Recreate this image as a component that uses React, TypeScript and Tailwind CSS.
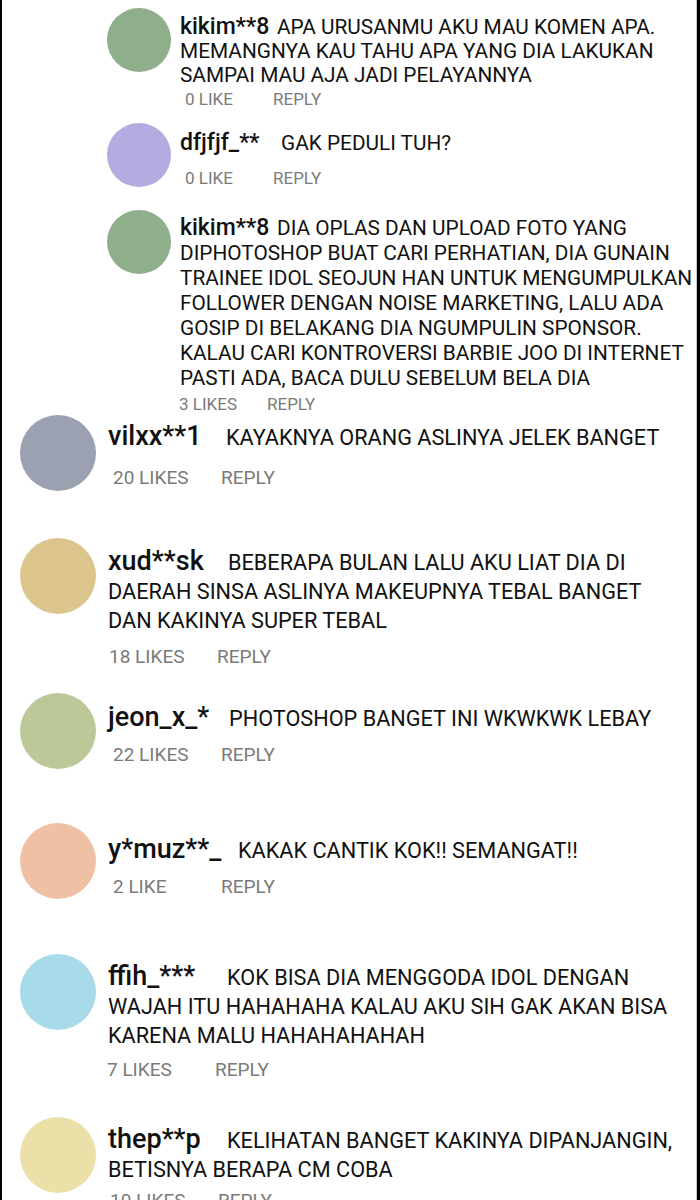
import React from "react";

type Item = {
  name: string;
  color: string;
  lines: string[];
  likes: string;
  h: string;
  pt: string;
  nameW: string;
  likesMt: string;
  likesMl: string;
  lead?: string;
};

const replies: Item[] = [
  {
    name: "kikim**8",
    color: "bg-[#8fae8b]",
    lines: [
      "APA URUSANMU AKU MAU KOMEN APA.",
      "MEMANGNYA KAU TAHU APA YANG DIA LAKUKAN",
      "SAMPAI MAU AJA JADI PELAYANNYA",
    ],
    likes: "0 LIKE",
    h: "h-[115px]",
    pt: "pt-[7px]",
    nameW: "w-[97px]",
    likesMt: "mt-[2px]",
    likesMl: "ml-[5px]",
    lead: "leading-[24px]",
  },
  {
    name: "dfjfjf_**",
    color: "bg-[#b2ace0]",
    lines: ["GAK PEDULI TUH?"],
    likes: "0 LIKE",
    h: "h-[87px]",
    pt: "pt-[7px]",
    nameW: "w-[101px]",
    likesMt: "mt-[12px]",
    likesMl: "ml-[5px]",
  },
  {
    name: "kikim**8",
    color: "bg-[#8fae8b]",
    lines: [
      "DIA OPLAS DAN UPLOAD FOTO YANG",
      "DIPHOTOSHOP BUAT CARI PERHATIAN, DIA GUNAIN",
      "TRAINEE IDOL SEOJUN HAN UNTUK MENGUMPULKAN",
      "FOLLOWER DENGAN NOISE MARKETING, LALU ADA",
      "GOSIP DI BELAKANG DIA NGUMPULIN SPONSOR.",
      "KALAU CARI KONTROVERSI BARBIE JOO DI INTERNET",
      "PASTI ADA, BACA DULU SEBELUM BELA DIA",
    ],
    likes: "3 LIKES",
    h: "h-[205px]",
    pt: "pt-[5px]",
    nameW: "w-[97px]",
    likesMt: "mt-[3px]",
    likesMl: "ml-[-1px]",
  },
];

const mains: Item[] = [
  {
    name: "vilxx**1",
    color: "bg-[#9ca1b2]",
    lines: ["KAYAKNYA ORANG ASLINYA JELEK BANGET"],
    likes: "20 LIKES",
    h: "h-[123px]",
    pt: "pt-[7px]",
    nameW: "w-[118px]",
    likesMt: "mt-[14px]",
    likesMl: "ml-[5px]",
  },
  {
    name: "xud**sk",
    color: "bg-[#dcc58c]",
    lines: [
      "BEBERAPA BULAN LALU AKU LIAT DIA DI",
      "DAERAH SINSA ASLINYA MAKEUPNYA TEBAL BANGET",
      "DAN KAKINYA SUPER TEBAL",
    ],
    likes: "18 LIKES",
    h: "h-[155px]",
    pt: "pt-[9px]",
    nameW: "w-[120px]",
    likesMt: "mt-[10px]",
    likesMl: "ml-[1px]",
  },
  {
    name: "jeon_x_*",
    color: "bg-[#bdc898]",
    lines: ["PHOTOSHOP BANGET INI WKWKWK LEBAY"],
    likes: "22 LIKES",
    h: "h-[130px]",
    pt: "pt-[10px]",
    nameW: "w-[121px]",
    likesMt: "mt-[10px]",
    likesMl: "ml-[5px]",
  },
  {
    name: "y*muz**_",
    color: "bg-[#efc0a4]",
    lines: ["KAKAK CANTIK KOK!! SEMANGAT!!"],
    likes: "2 LIKE",
    h: "h-[131px]",
    pt: "pt-[12px]",
    nameW: "w-[130px]",
    likesMt: "mt-[10px]",
    likesMl: "ml-[5px]",
  },
  {
    name: "ffih_***",
    color: "bg-[#a8dbe9]",
    lines: [
      "KOK BISA DIA MENGGODA IDOL DENGAN",
      "WAJAH ITU HAHAHAHA KALAU AKU SIH GAK AKAN BISA",
      "KARENA MALU HAHAHAHAHAH",
    ],
    likes: "7 LIKES",
    h: "h-[163px]",
    pt: "pt-[8px]",
    nameW: "w-[119px]",
    likesMt: "mt-[8px]",
    likesMl: "ml-[-1px]",
  },
  {
    name: "thep**p",
    color: "bg-[#ebe0a7]",
    lines: ["KELIHATAN BANGET KAKINYA DIPANJANGIN,", "BETISNYA BERAPA CM COBA"],
    likes: "10 LIKES",
    h: "h-[160px]",
    pt: "pt-[8px]",
    nameW: "w-[119px]",
    likesMt: "mt-[5px]",
    likesMl: "ml-[2px]",
  },
];

function Reply({ it }: { it: Item }) {
  return (
    <div className={`flex items-start pl-[105px] ${it.h}`}>
      <div className={`h-[64px] w-[64px] shrink-0 rounded-full ${it.color}`} />
      <div className={`ml-[9px] ${it.pt}`}>
        <div className={`whitespace-nowrap text-[20.8px] text-[#111] ${it.lead ?? "leading-[25px]"}`}>
          <span className={`inline-block ${it.nameW} text-[23px] font-medium text-[#111]`}>
            {it.name}
          </span>
          {it.lines.map((l, i) => (
            <React.Fragment key={i}>
              {i > 0 && <br />}
              {l}
            </React.Fragment>
          ))}
        </div>
        <div className={`flex text-[17px] leading-[20px] text-[#7a7a7a] ${it.likesMt} ${it.likesMl}`}>
          <span className="w-[88px]">{it.likes}</span>
          <span>REPLY</span>
        </div>
      </div>
    </div>
  );
}

function Main({ it }: { it: Item }) {
  return (
    <div className={`flex items-start pl-[18px] ${it.h}`}>
      <div className={`h-[76px] w-[76px] shrink-0 rounded-full ${it.color}`} />
      <div className={`ml-[12px] ${it.pt}`}>
        <div className="whitespace-nowrap text-[21.7px] leading-[29px] text-[#111]">
          <span className={`inline-block ${it.nameW} text-[27px] font-medium text-[#111]`}>
            {it.name}
          </span>
          {it.lines.map((l, i) => (
            <React.Fragment key={i}>
              {i > 0 && <br />}
              {l}
            </React.Fragment>
          ))}
        </div>
        <div className={`flex text-[19px] leading-[24px] text-[#7a7a7a] ${it.likesMt} ${it.likesMl}`}>
          <span className="w-[108px]">{it.likes}</span>
          <span>REPLY</span>
        </div>
      </div>
    </div>
  );
}

export default function App() {
  return (
    <div
      className="h-[1200px] w-[700px] overflow-hidden border-l-2 border-r-[3px] border-black bg-white"
      style={{ fontFamily: "Roboto, 'Noto Sans', sans-serif" }}
    >
      <div className="h-full border-r border-[#c8c8c8] pt-[8px]">
        {replies.map((it, i) => (
          <Reply key={"r" + i} it={it} />
        ))}
        {mains.map((it, i) => (
          <Main key={"m" + i} it={it} />
        ))}
      </div>
    </div>
  );
}
